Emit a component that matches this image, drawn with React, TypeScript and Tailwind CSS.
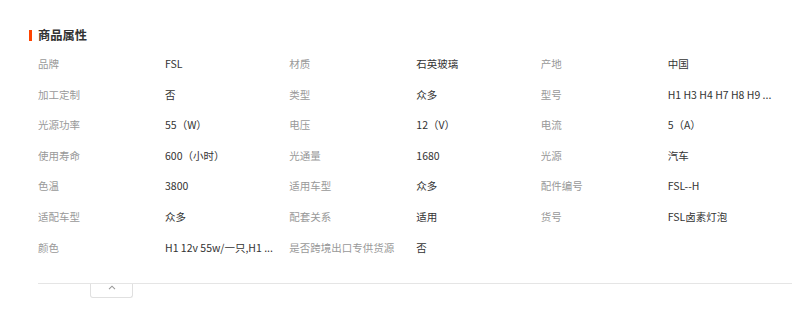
const rows: string[][] = [
  ["品牌", "FSL", "材质", "石英玻璃", "产地", "中国"],
  ["加工定制", "否", "类型", "众多", "型号", "H1 H3 H4 H7 H8 H9 ..."],
  ["光源功率", "55（W）", "电压", "12（V）", "电流", "5（A）"],
  ["使用寿命", "600（小时）", "光通量", "1680", "光源", "汽车"],
  ["色温", "3800", "适用车型", "众多", "配件编号", "FSL--H"],
  ["适配车型", "众多", "配套关系", "适用", "货号", "FSL卤素灯泡"],
  ["颜色", "H1 12v 55w/一只,H1 ...", "是否跨境出口专供货源", "否", "", ""],
]

const App = () => {
  return (
    <div className="w-[805px] h-[310px] bg-white pt-[28px] font-['Noto_Sans_CJK_SC',sans-serif]">
      <div className="flex items-center h-[14px] ml-[29px]">
        <div className="w-[3px] h-[11px] bg-[#ff4400]"></div>
        <h2 className="ml-[6px] text-[12.25px] font-bold text-[#333] leading-none">商品属性</h2>
      </div>

      <div className="ml-[38px] w-[754px] mt-[6.7px]">
        <div className="grid grid-cols-[127px_1fr_127px_1fr_127px_1fr]">
          {rows.map((row, i) =>
            row.map((cell, j) => (
              <div
                key={i + "-" + j}
                className={
                  "h-[30.6px] flex items-center text-[10.5px] whitespace-nowrap overflow-hidden " +
                  (j % 2 === 0 ? "text-[#999]" : "text-[#333]")
                }
              >
                {cell}
              </div>
            ))
          )}
        </div>

        <div className="mt-[20px] border-t border-[#e5e5e5]">
          <div className="ml-[52px] w-[43px] h-[14px] border-x border-b border-[#e0e0e0] rounded-b-[3px] flex items-center justify-center">
            <svg width="8" height="5" viewBox="0 0 8 5" className="-mt-[6px]">
              <path d="M1 4.2 L4 1.2 L7 4.2" fill="none" stroke="#999" strokeWidth="1.1" />
            </svg>
          </div>
        </div>
      </div>
    </div>
  )
}

export default App
